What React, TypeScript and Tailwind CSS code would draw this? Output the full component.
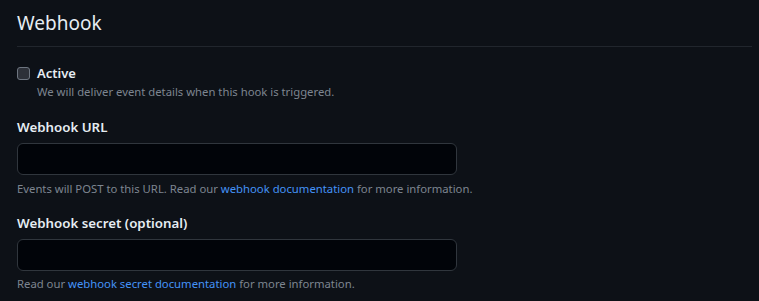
import React from "react";

const font = { fontFamily: '"Noto Sans", "Liberation Sans", sans-serif' };

export default function App() {
  return (
    <div
      className="w-[759px] h-[301px] bg-[#0d1117] pl-[17px] pr-[7px] text-[#e6edf3] overflow-hidden"
      style={font}
    >
      <div className="pt-[8px] pb-[8px] border-b border-[#21262d]">
        <h2 className="text-[19px] leading-[30px] font-normal text-[#e6edf3]">Webhook</h2>
      </div>

      <div className="mt-[16px] flex items-start gap-[7px]">
        <div className="mt-[4px] w-[13px] h-[13px] rounded-[3px] border border-[#6e7681] bg-[#2d3139] shrink-0" />
        <div className="flex flex-col">
          <span className="text-[13px] leading-[20px] font-semibold">Active</span>
          <span className="text-[11.3px] leading-[18px] text-[#7d8590]">
            We will deliver event details when this hook is triggered.
          </span>
        </div>
      </div>

      <div className="mt-[16px] flex flex-col">
        <label className="text-[13.3px] leading-[20px] font-semibold">Webhook URL</label>
        <div className="mt-[6px] w-[440px] h-[32px] rounded-[6px] border border-[#30363d] bg-[#010409]" />
        <p className="mt-[5px] text-[11.3px] leading-[18px] text-[#7d8590]">
          Events will POST to this URL. Read our{" "}
          <a className="text-[#4493f8]">webhook documentation</a> for more information.
        </p>
      </div>

      <div className="mt-[15px] flex flex-col">
        <label className="text-[13.3px] leading-[20px] font-semibold">Webhook secret (optional)</label>
        <div className="mt-[6px] w-[440px] h-[32px] rounded-[6px] border border-[#30363d] bg-[#010409]" />
        <p className="mt-[4px] text-[11.3px] leading-[18px] text-[#7d8590]">
          Read our <a className="text-[#4493f8]">webhook secret documentation</a> for more information.
        </p>
      </div>
    </div>
  );
}
